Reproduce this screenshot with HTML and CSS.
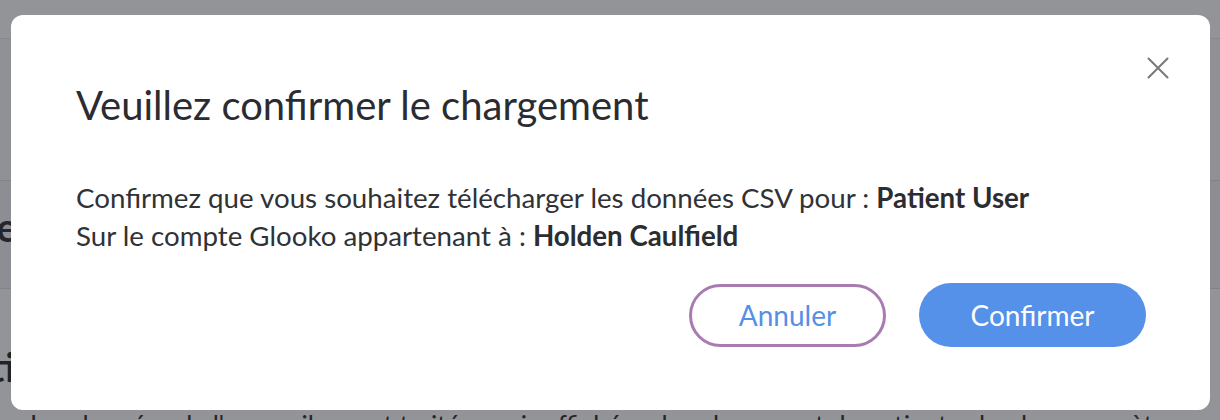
FILE: index.html
```html
<!DOCTYPE html>
<html lang="fr">
<head>
<meta charset="utf-8">
<title>Confirmation</title>
<link rel="stylesheet" href="styles.css">
</head>
<body>
<div class="page">
  <div class="topbar"></div>
  <div class="band band-a"></div>
  <div class="band band-b"><h2 class="page-title">Patiente</h2></div>
  <div class="band band-c">
    <h3 class="page-sub">Exportati</h3>
    <p class="page-text">Les données de l'appareil seront traitées puis affichées dans le rapport du patient selon les paramètres</p>
  </div>
</div>
<div class="overlay"></div>
<div class="modal" role="dialog">
  <button class="close" aria-label="Fermer">
    <svg width="22" height="22" viewBox="0 0 22 22"><path d="M1.5 1.5L20.5 20.5M20.5 1.5L1.5 20.5" stroke="#78797c" stroke-width="2" stroke-linecap="round"/></svg>
  </button>
  <h1 class="title">Veuillez confirmer le chargement</h1>
  <div class="body">
    <p>Confirmez que vous souhaitez télécharger les données CSV pour : <strong>Patient User</strong></p>
    <p>Sur le compte Glooko appartenant à : <strong>Holden Caulfield</strong></p>
  </div>
  <div class="actions">
    <button class="btn btn-outline">Annuler</button>
    <button class="btn btn-primary">Confirmer</button>
  </div>
</div>
</body>
</html>
```
FILE: styles.css
```css
* { box-sizing: border-box; }
html, body { margin: 0; padding: 0; overflow: hidden; }
body {
  width: 1220px;
  height: 420px;
  font-family: Lato, "Open Sans", sans-serif;
  background: #ffffff;
  position: relative;
}
.page { display: flex; flex-direction: column; height: 420px; overflow: hidden; }
.topbar { height: 39px; background: #ffffff; border-bottom: 1px solid #e6e7ea; }
.band-a { height: 142px; background: #f8f8f9; border-bottom: 1px solid #dcdde0; }
.band-b { height: 108px; background: #f2f3f5; border-bottom: 1px solid #dcdde0; overflow: hidden; }
.band-c { height: 131px; background: #ffffff; overflow: hidden; }
.page-title { margin: 22px 0 0 -132px; font-size: 40px; font-weight: 700; color: #222; }
.page-sub { margin: 56px 0 0 -150px; font-size: 40px; font-weight: 700; color: #1b1c1f; line-height: 44px; }
.page-text { margin: 20px 0 0 30px; font-size: 26px; color: #222; white-space: nowrap; }
.overlay {
  position: absolute; inset: 0;
  background: rgba(38, 42, 50, 0.5);
}
.modal {
  position: absolute;
  left: 11px; top: 15px;
  width: 1199px; height: 395px;
  background: #ffffff;
  border-radius: 12px;
  padding: 66px 64px 0 65px;
}
.close {
  position: absolute;
  top: 42px; right: 41px;
  width: 22px; height: 22px;
  padding: 0; border: 0; background: none;
  display: flex;
}
.title {
  margin: 0;
  font-size: 40px;
  font-weight: 400;
  color: #2a2c31;
  line-height: 48px;
}
.body {
  margin-top: 50px;
  font-size: 27.7px;
  line-height: 38px;
  color: #303236;
}
.body p { margin: 0; white-space: nowrap; }
.body strong { font-weight: 700; color: #2b2d31; }
.actions {
  display: flex;
  justify-content: flex-end;
  align-items: center;
  gap: 33px;
  margin-top: 28px;
}
.btn {
  font-family: Lato, "Open Sans", sans-serif;
  font-size: 28px;
  border-radius: 32px;
  cursor: pointer;
}
.btn-outline {
  width: 197px;
  height: 63px;
  background: #ffffff;
  color: #5590e6;
  border: 3px solid #a87cb1;
}
.btn-primary {
  width: 227px;
  height: 64px;
  background: #5590e9;
  color: #ffffff;
  border: 0;
}
```
